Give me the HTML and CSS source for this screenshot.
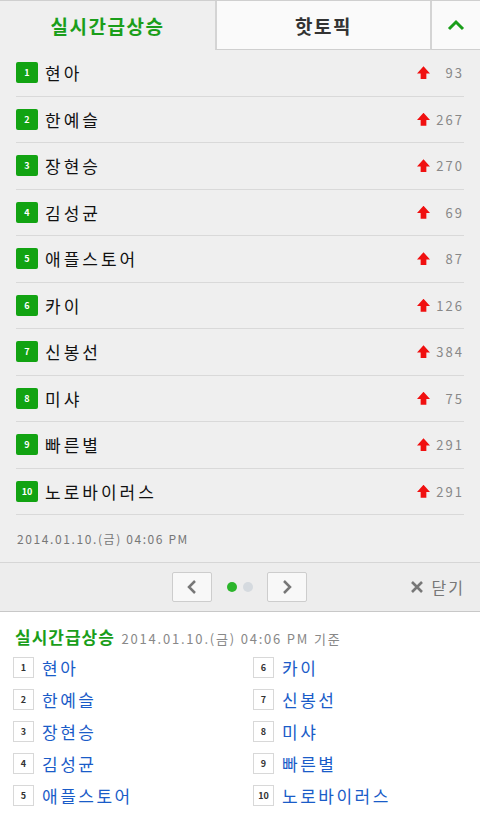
FILE: index.html
```html
<!DOCTYPE html>
<html>
<head>
<meta charset="utf-8">
<title>실시간급상승</title>
<link rel="stylesheet" href="styles.css">
</head>
<body>
  <div class="panel">
    <div class="tabs">
      <div class="tab on">실시간급상승</div>
      <div class="tab">핫토픽</div>
      <div class="tab fold">
        <svg width="18" height="12" viewBox="0 0 18 12"><path d="M2 10 L9 3 L16 10" fill="none" stroke="#1a9e1a" stroke-width="3"/></svg>
      </div>
    </div>

    <ul class="rank">
      <li><span class="num">1</span><span class="name">현아</span><span class="up"></span><span class="cnt">93</span></li>
      <li><span class="num">2</span><span class="name">한예슬</span><span class="up"></span><span class="cnt">267</span></li>
      <li><span class="num">3</span><span class="name">장현승</span><span class="up"></span><span class="cnt">270</span></li>
      <li><span class="num">4</span><span class="name">김성균</span><span class="up"></span><span class="cnt">69</span></li>
      <li><span class="num">5</span><span class="name">애플스토어</span><span class="up"></span><span class="cnt">87</span></li>
      <li><span class="num">6</span><span class="name">카이</span><span class="up"></span><span class="cnt">126</span></li>
      <li><span class="num">7</span><span class="name">신봉선</span><span class="up"></span><span class="cnt">384</span></li>
      <li><span class="num">8</span><span class="name">미샤</span><span class="up"></span><span class="cnt">75</span></li>
      <li><span class="num">9</span><span class="name">빠른별</span><span class="up"></span><span class="cnt">291</span></li>
      <li><span class="num">10</span><span class="name">노로바이러스</span><span class="up"></span><span class="cnt">291</span></li>
    </ul>
    <div class="stamp">2014.01.10.(금) 04:06 PM</div>

    <div class="pager">
      <div class="nav">
        <span class="btn">
          <svg width="12" height="14" viewBox="0 0 12 14"><path d="M9 1 L3 7 L9 13" fill="none" stroke="#777" stroke-width="2.5"/></svg>
        </span>
        <span class="dot on"></span>
        <span class="dot"></span>
        <span class="btn">
          <svg width="12" height="14" viewBox="0 0 12 14"><path d="M3 1 L9 7 L3 13" fill="none" stroke="#777" stroke-width="2.5"/></svg>
        </span>
      </div>
      <span class="close">
        <svg width="14" height="14" viewBox="0 0 14 14"><path d="M2 2 L12 12 M12 2 L2 12" stroke="#777" stroke-width="2.6"/></svg>
        닫기
      </span>
    </div>
  </div>

  <div class="summary">
    <div class="head"><b>실시간급상승</b> <span>2014.01.10.(금) 04:06 PM 기준</span></div>
    <ol class="cols">
      <li><span class="box">1</span>현아</li>
      <li><span class="box">6</span>카이</li>
      <li><span class="box">2</span>한예슬</li>
      <li><span class="box">7</span>신봉선</li>
      <li><span class="box">3</span>장현승</li>
      <li><span class="box">8</span>미샤</li>
      <li><span class="box">4</span>김성균</li>
      <li><span class="box">9</span>빠른별</li>
      <li><span class="box">5</span>애플스토어</li>
      <li><span class="box">10</span>노로바이러스</li>
    </ol>
  </div>
</body>
</html>
```

FILE: styles.css
```css
html, body {
  margin: 0;
  padding: 0;
  background: #fff;
  font-family: "Noto Sans CJK KR", "Noto Sans", sans-serif;
}

.panel {
  background: #efefef;
  border-top: 1px solid #cfcfcf;
}

.tabs {
  display: flex;
  height: 49px;
}

.tab {
  flex: 0 0 215px;
  display: flex;
  align-items: center;
  justify-content: center;
  font-size: 19px;
  font-weight: bold;
  color: #333;
  background: #fafafa;
  border-bottom: 1px solid #cfcfcf;
  border-left: 2px solid #d4d4d4;
  box-sizing: border-box;
  letter-spacing: 1.5px;
}

.tab.on {
  color: #1a9e1a;
  background: #efefef;
  border: none;
}

.tab.fold {
  flex: 1;
}

.rank {
  list-style: none;
  margin: 0;
  padding: 0 16px;
}

.rank li {
  display: flex;
  align-items: center;
  height: 45.5px;
  border-bottom: 1px solid #d9d9d9;
}

.num {
  width: 22px;
  height: 21px;
  border-radius: 2px;
  background: #12a312;
  color: #fff;
  font-size: 9px;
  font-weight: bold;
  display: flex;
  align-items: center;
  justify-content: center;
}

.name {
  flex: 1;
  margin-left: 7px;
  font-size: 17px;
  color: #111;
  letter-spacing: 3px;
}

.up {
  width: 13px;
  height: 13px;
  background: #f01010;
  clip-path: polygon(50% 0, 100% 55%, 72% 55%, 72% 100%, 28% 100%, 28% 55%, 0 55%);
}

.cnt {
  width: 34px;
  text-align: right;
  font-size: 13px;
  color: #888;
  letter-spacing: 2px;
}

.stamp {
  height: 47px;
  padding-left: 17px;
  display: flex;
  align-items: center;
  font-size: 12px;
  color: #777;
  letter-spacing: 1.6px;
}

.pager {
  height: 48px;
  border-top: 1px solid #d6d6d6;
  border-bottom: 1px solid #c8c8c8;
  background: #ededed;
  display: flex;
  align-items: center;
}

.nav {
  margin-left: 172px;
  display: flex;
  align-items: center;
}

.btn {
  width: 38px;
  height: 28px;
  background: #f8f8f8;
  border: 1px solid #cdcdcd;
  border-radius: 2px;
  display: flex;
  align-items: center;
  justify-content: center;
}

.dot {
  width: 10px;
  height: 10px;
  border-radius: 50%;
  background: #d5dadf;
  margin-right: 14px;
}

.dot.on {
  background: #2bb52b;
  margin: 0 6px 0 15px;
}

.close {
  margin-left: auto;
  margin-right: 15px;
  display: flex;
  align-items: center;
  gap: 8px;
  font-size: 16px;
  color: #777;
  letter-spacing: 2px;
}

.summary {
  padding: 12px 13px 0;
}

.head b {
  margin-left: 2px;
  font-size: 17px;
  color: #1a9e1a;
  letter-spacing: 1px;
}

.head span {
  margin-left: 3px;
  font-size: 13px;
  color: #888;
  letter-spacing: 1.8px;
}

.cols {
  list-style: none;
  margin: 8px 0 0;
  padding: 0;
  display: grid;
  grid-template-columns: 240px 1fr;
  row-gap: 11px;
}

.cols li {
  display: flex;
  align-items: center;
  height: 21px;
  font-size: 17px;
  color: #1a5cc8;
  letter-spacing: 2.5px;
}

.box {
  width: 19px;
  height: 19px;
  border: 1px solid #d8d8d8;
  margin-right: 8px;
  display: flex;
  align-items: center;
  justify-content: center;
  font-size: 9px;
  font-weight: bold;
  color: #333;
  letter-spacing: 0;
}
```
